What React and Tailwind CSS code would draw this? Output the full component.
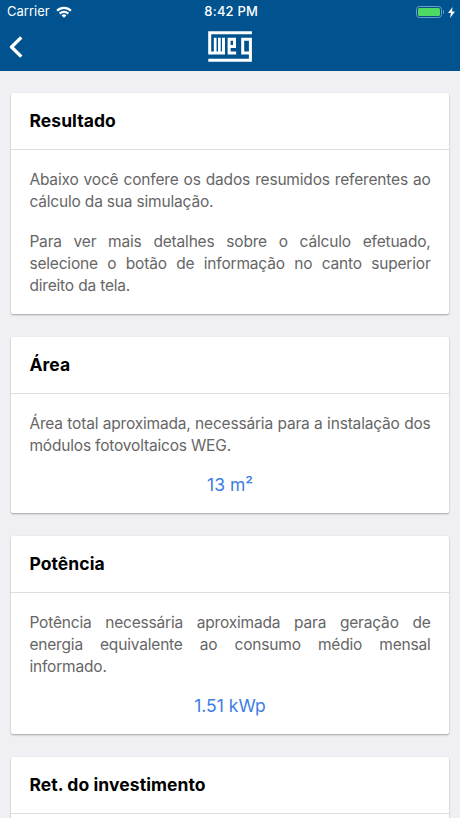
const cards = [
  {
    title: "Resultado",
    paragraphs: [
      "Abaixo você confere os dados resumidos referentes ao cálculo da sua simulação.",
      "Para ver mais detalhes sobre o cálculo efetuado, selecione o botão de informação no canto superior direito da tela.",
    ],
  },
  {
    title: "Área",
    paragraphs: ["Área total aproximada, necessária para a instalação dos módulos fotovoltaicos WEG."],
    value: "13 m²",
  },
  {
    title: "Potência",
    paragraphs: ["Potência necessária aproximada para geração de energia equivalente ao consumo médio mensal informado."],
    value: "1.51 kWp",
  },
  { title: "Ret. do investimento", paragraphs: [] },
];

function Wifi() {
  return (
    <svg className="h-3 w-4" viewBox="0 0 16 12" fill="none" stroke="white" strokeWidth="2.2">
      <path d="M1.1 4.7a9.8 9.8 0 0 1 13.8 0" />
      <path d="M3.7 7.6a6.1 6.1 0 0 1 8.6 0" />
      <path d="M8 11.8 5.6 9.4a3.4 3.4 0 0 1 4.8 0z" fill="white" stroke="none" />
    </svg>
  );
}

function Logo() {
  return (
    <svg className="h-[31px] w-11" viewBox="0 0 44 31" fill="none" stroke="white" strokeWidth="3">
      <path d="M43.9 1.8H1.7V22H15.5V6.7" />
      <path d="M7.2 6.7V22M11.4 6.7V22" strokeWidth="2.7" />
      <path d="M20.9 15.6H26.5V8.2H21.1V22H28.2" />
      <path d="M42.4 8.2H34.7V22H42.4M42.4 6.7V29.2H.3" />
    </svg>
  );
}

function Battery() {
  return (
    <div className="flex items-center">
      <div className="h-3 w-[26px] rounded-[3.5px] border border-[#6aa0bd] p-px">
        <div className="h-full rounded-[1.5px] bg-[#4cd964]" />
      </div>
      <div className="ml-px h-1 w-[1.5px] rounded-r bg-[#6aa0bd]" />
      <svg className="ml-[3.5px] h-[11px] w-[7px]" viewBox="0 0 7 11" fill="white">
        <path d="M4.6 0 0 6.1h2.9L2.1 11 7 4.6H4z" />
      </svg>
    </div>
  );
}

function Card({ title, paragraphs, value }) {
  return (
    <section className="rounded-[2px] bg-white shadow-[0_1px_2px_rgba(0,0,0,0.32)]">
      <h2 className="h-14 pl-[18px] text-[17.5px] leading-[56.5px] font-bold tracking-[0.08px] text-black">
        {title}
      </h2>
      <div className="border-t border-[#dedede] px-[18px] pt-[19px] pb-[16.8px] text-[#666]">
        <div className="flex flex-col gap-[18px]">
          {paragraphs.map((text) => (
            <p key={text} className="text-justify text-[15.5px] leading-[22.1px] tracking-[-0.18px]">
              {text}
            </p>
          ))}
        </div>
        {value && (
          <p className="mt-4 text-center text-[17.5px] leading-[23.5px] text-[#3d7de4]">{value}</p>
        )}
      </div>
    </section>
  );
}

export default function App() {
  return (
    <div className="h-[818px] w-[460px] overflow-hidden bg-[#efeff4] font-['Inter','Liberation_Sans',sans-serif]">
      <header className="h-[71px] bg-[#00538f] text-white">
        <div className="grid h-6 grid-cols-3 items-center pr-[5.5px] pl-[7px]">
          <div className="flex items-center gap-[6px] text-[13px]">
            <span>Carrier</span>
            <Wifi />
          </div>
          <div className="pl-px text-center text-[13px] font-medium tracking-[0.2px]">8:42 PM</div>
          <div className="flex justify-end">
            <Battery />
          </div>
        </div>
        <div className="grid h-[47px] grid-cols-3 items-start pt-[7px]">
          <svg
            className="mt-[5px] ml-[9px] h-[22px] w-[14px]"
            viewBox="0 0 14 22"
            fill="none"
            stroke="white"
            strokeWidth="3.4"
            strokeLinejoin="round"
          >
            <path d="M12.3 1.4 2.5 11l9.8 9.6" />
          </svg>
          <div className="flex justify-center">
            <Logo />
          </div>
        </div>
      </header>
      <main className="flex flex-col gap-[22.5px] px-[11.4px] pt-[22px]">
        {cards.map((card) => (
          <Card key={card.title} {...card} />
        ))}
      </main>
    </div>
  );
}
